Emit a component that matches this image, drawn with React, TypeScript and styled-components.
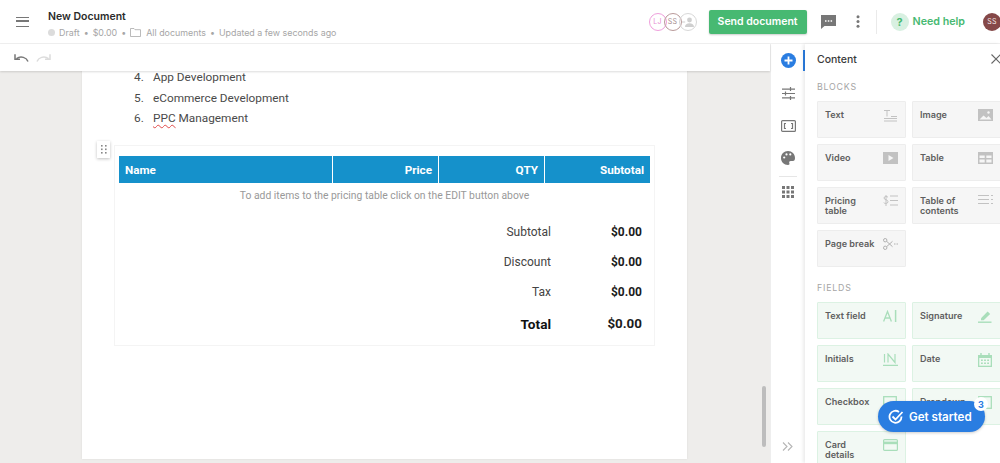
import React, { FunctionComponent, ReactNode } from 'react';
import styled, { createGlobalStyle } from 'styled-components';

const Global = createGlobalStyle`
  html, body { margin: 0; padding: 0; height: 100%; overflow: hidden; background: #fff; }
  body { font-family: Inter, "Liberation Sans", sans-serif; }
  * { box-sizing: border-box; }
`;

const Page = styled.div`
  width: 1000px;
  height: 463px;
  display: flex;
  flex-direction: column;
  position: relative;
  overflow: hidden;
`;

const Header = styled.header`
  height: 44px;
  flex: none;
  display: flex;
  align-items: center;
  padding: 0 0 0 16px;
  border-bottom: 1px solid #f0f0f0;
`;

const MenuButton = styled.div`
  width: 13px;
  height: 10px;
  border-top: 1.5px solid #777;
  border-bottom: 1.5px solid #777;
  position: relative;
  &::after {
    content: '';
    position: absolute;
    left: 0;
    right: 0;
    top: 2.7px;
    height: 1.5px;
    background: #777;
  }
`;

const DocInfo = styled.div`
  margin-left: 19px;
  flex: 1;
  margin-top: 5px;
`;

const DocTitle = styled.div`
  font-size: 10.5px;
  font-weight: 600;
  color: #2b2b2b;
  line-height: 14px;
`;

const DocMeta = styled.div`
  display: flex;
  align-items: center;
  font-size: 8.9px;
  color: #a6a6a6;
  line-height: 12px;
  margin-top: 3px;
  white-space: nowrap;
`;

const StatusDot = styled.span`
  width: 7px;
  height: 7px;
  border-radius: 50%;
  background: #dcdcdc;
  margin-right: 4px;
`;

const Sep = styled.span`
  margin: 0 4px;
`;

const Avatars = styled.div`
  display: flex;
  margin-right: 12px;
`;

const Avatar = styled.div<{ $color: string; $text: string }>`
  width: 18px;
  height: 18px;
  border-radius: 50%;
  border: 1px solid ${p => p.$color};
  color: ${p => p.$text};
  background: transparent;
  font-size: 7px;
  letter-spacing: .3px;
  display: flex;
  align-items: center;
  justify-content: center;
  margin-left: -3px;
`;

const SendButton = styled.button`
  width: 98px;
  height: 24px;
  border: 0;
  border-radius: 2px;
  background: #47b972;
  color: #fff;
  font: 600 10.5px Inter, sans-serif;
  padding: 0;
  box-shadow: 0 1px 2px rgba(0,0,0,.2);
`;

const IconSlot = styled.div<{ $ml: number }>`
  margin-left: ${p => p.$ml}px;
  display: flex;
  align-items: center;
`;

const VDivider = styled.div`
  width: 1px;
  height: 24px;
  background: #eaeaea;
  margin-left: 16px;
`;

const HelpBadge = styled.div`
  width: 18px;
  height: 18px;
  border-radius: 50%;
  background: #d8f0e1;
  color: #47b972;
  font-size: 11px;
  font-weight: 700;
  display: flex;
  align-items: center;
  justify-content: center;
  margin-left: 14px;
`;

const HelpText = styled.div`
  font-size: 10.7px;
  font-weight: 600;
  color: #47b972;
  margin-left: 4px;
  white-space: nowrap;
`;

const UserAvatar = styled.div`
  width: 18px;
  height: 18px;
  border-radius: 50%;
  background: #854848;
  color: #f3e7e7;
  font-size: 7px;
  letter-spacing: .3px;
  display: flex;
  align-items: center;
  justify-content: center;
  flex: none;
  margin-left: 18px;
  margin-right: -1px;
`;

const Body = styled.div`
  flex: 1;
  display: flex;
  min-height: 0;
`;

const Main = styled.main`
  width: 770px;
  flex: none;
  display: flex;
  flex-direction: column;
  min-height: 0;
  position: relative;
`;

const Toolbar = styled.div`
  height: 27px;
  flex: none;
  display: flex;
  align-items: center;
  gap: 7px;
  padding: 0 14px;
  background: #fff;
  box-shadow: 0 1px 2px rgba(0,0,0,.14);
  position: relative;
  z-index: 2;
`;

const Canvas = styled.div`
  flex: 1;
  background: #eeedeb;
  padding: 0 83px 0 82px;
  min-height: 0;
  overflow: hidden;
`;

const Scrollbar = styled.div`
  position: absolute;
  left: 762px;
  top: 342px;
  width: 4px;
  height: 61px;
  background: #bdbdbd;
  border-radius: 2px;
`;

const Sheet = styled.div`
  background: #fff;
  height: 100%;
  padding: 0 32px;
  font-family: Roboto, sans-serif;
  box-shadow: 0 0 2px rgba(0,0,0,.08);
  position: relative;
`;

const ServiceList = styled.div`
  margin-top: -4px;
  padding: 0 0 0 20px;
  height: 78px;
`;

const ServiceItem = styled.div`
  display: flex;
  font-size: 11.8px;
  color: #4a4a4a;
  line-height: 20.5px;
`;

const ItemNum = styled.span`
  width: 19px;
`;

const Squiggle = styled.span`
  text-decoration: underline wavy #e04a4a 1px;
  text-underline-offset: 2px;
`;

const DragHandle = styled.div`
  position: absolute;
  left: 15px;
  top: 74px;
  width: 13px;
  height: 17px;
  background: #fff;
  box-shadow: 0 1px 3px rgba(0,0,0,.25);
  display: flex;
  align-items: center;
  justify-content: center;
`;

const PricingBlock = styled.div`
  width: 541px;
  height: 201px;
  border: 1px solid #f4f4f4;
  padding: 10px 4px 0 4px;
`;

const TableHead = styled.div`
  display: grid;
  grid-template-columns: 213px 105px 105px 105px;
  gap: 1px;
  height: 27px;
`;

const HeadCell = styled.div<{ $left?: boolean }>`
  background: #1591cb;
  color: #fff;
  font-size: 11.7px;
  font-weight: 700;
  display: flex;
  align-items: center;
  justify-content: ${p => (p.$left ? 'flex-start' : 'flex-end')};
  padding: 0 6px;
`;

const EmptyNote = styled.div`
  text-align: center;
  color: #999;
  font-size: 10.35px;
  line-height: 14px;
  margin-top: 6px;
  margin-bottom: 14px;
`;

const TotalRow = styled.div<{ $big?: boolean }>`
  display: flex;
  justify-content: flex-end;
  align-items: center;
  height: ${p => (p.$big ? 33 : 30)}px;
  padding-right: 8px;
`;

const TotalLabel = styled.div<{ $big?: boolean }>`
  font-size: ${p => (p.$big ? 13.6 : 12)}px;
  font-weight: ${p => (p.$big ? 700 : 400)};
  color: ${p => (p.$big ? '#111' : '#444')};
`;

const TotalValue = styled.div<{ $big?: boolean }>`
  width: 91px;
  text-align: right;
  font-size: ${p => (p.$big ? 13.4 : 12)}px;
  font-weight: 700;
  color: #1c1c1c;
`;

const Rail = styled.nav`
  width: 35px;
  flex: none;
  display: flex;
  flex-direction: column;
  align-items: center;
  border-left: 1px solid #eee;
  padding-top: 9px;
  position: relative;
`;

const RailItem = styled.div<{ $h: number }>`
  height: ${p => p.$h}px;
  display: flex;
  align-items: flex-start;
  justify-content: center;
`;

const RailDivider = styled.div`
  width: 18px;
  height: 1px;
  background: #e6e6e6;
  margin-bottom: 9px;
`;

const Collapse = styled.div`
  position: absolute;
  left: 11px;
  top: 398px;
  display: flex;
`;

const ActiveMark = styled.div`
  position: absolute;
  right: 0;
  top: 6px;
  width: 2px;
  height: 21px;
  background: #2a7de1;
`;

const Panel = styled.aside`
  flex: 1;
  padding: 0 0 0 12px;
  box-shadow: -2px 0 3px rgba(0,0,0,.08);
  position: relative;
  overflow: hidden;
`;

const PanelHead = styled.div`
  display: flex;
  justify-content: space-between;
  align-items: center;
  height: 30px;
  font-size: 10.5px;
  font-weight: 500;
  color: #3a3a3a;
`;

const SectionTitle = styled.div<{ $mt: number }>`
  font-size: 8.8px;
  letter-spacing: .8px;
  color: #a5a5a5;
  line-height: 12px;
  margin-top: ${p => p.$mt}px;
  margin-bottom: 8px;
`;

const Tiles = styled.div`
  display: grid;
  grid-template-columns: 89px 89px;
  grid-auto-rows: 37px;
  gap: 6px;
`;

const Tile = styled.div<{ $field?: boolean }>`
  background: ${p => (p.$field ? '#f2f9f4' : '#f6f6f6')};
  border: 1px solid ${p => (p.$field ? '#dcf2e3' : '#ededed')};
  border-radius: 1px;
  padding: 7.5px 0 0 7px;
  display: flex;
  justify-content: space-between;
  font-size: 9.1px;
  font-weight: 600;
  line-height: 10.5px;
  color: #5f5f5f;
  min-width: 0;
`;

const TileIcon = styled.div`
  flex: none;
  width: 22px;
  margin-top: -.5px;
  display: flex;
`;

const GetStarted = styled.div`
  position: absolute;
  left: 878px;
  top: 401px;
  width: 107px;
  height: 31px;
  border-radius: 16px;
  background: #2a7de1;
  color: #fff;
  font-size: 11.6px;
  font-weight: 600;
  display: flex;
  align-items: center;
  padding-left: 10px;
  gap: 5px;
  box-shadow: 0 1px 3px rgba(0,0,0,.2);
`;

const Count = styled.div`
  position: absolute;
  right: -3px;
  top: -4px;
  width: 14px;
  height: 14px;
  border-radius: 50%;
  background: #fff;
  color: #2a7de1;
  font-size: 9px;
  font-weight: 700;
  display: flex;
  align-items: center;
  justify-content: center;
`;

const G = '#a9deba';
const K = '#c2c2c2';

const Grip = () => (
  <svg width="6" height="9" viewBox="0 0 6 9" fill="#888">
    {[0, 3.5, 7].map(y => [0, 4].map(x => <rect key={`${x}-${y}`} x={x} y={y} width="1.6" height="1.6" />))}
  </svg>
);

const blocks: { label: ReactNode; icon: ReactNode }[] = [
  { label: 'Text', icon: <svg width="15" height="13" viewBox="0 0 15 13" fill="none" stroke={K}><path d="M1 1.5h6M4 1.5v6M8 7.5h6M1 9.5h13M1 12h13" /></svg> },
  { label: 'Image', icon: <svg width="15" height="12" viewBox="0 0 15 12"><rect width="15" height="12" fill={K} /><path d="M1.5 10.5l4-4 3 2.5 2-2 3 3.5z" fill="#f6f6f6" /><circle cx="10.5" cy="3.5" r="1.2" fill="#f6f6f6" /></svg> },
  { label: 'Video', icon: <svg width="15" height="12" viewBox="0 0 15 12"><rect width="15" height="12" fill={K} /><path d="M5.5 3l5 3-5 3z" fill="#f6f6f6" /></svg> },
  { label: 'Table', icon: <svg width="15" height="12" viewBox="0 0 15 12"><rect width="15" height="12" fill={K} /><path d="M1.5 3.5h5.2v2.6H1.5zM8.3 3.5h5.2v2.6H8.3zM1.5 7.5h5.2v3H1.5zM8.3 7.5h5.2v3H8.3z" fill="#f6f6f6" /></svg> },
  { label: <>Pricing<br />table</>, icon: <svg width="15" height="11" viewBox="0 0 15 11" fill="none" stroke={K}><path d="M7 1h8M7 5.500h8M7 10h8" /><path d="M5 2.300C4.400 1.200 1 1 1 3c0 2.200 4 1.300 4 3.700C5 9 1.400 8.800.7 7.600M3 0v11" /></svg> },
  { label: <>Table of<br />contents</>, icon: <svg width="15" height="9" viewBox="0 0 15 9" fill="none" stroke={K}><path d="M0 .5h11M0 4.500h11M0 8.500h11M13 .5h2M13 4.500h2M13 8.500h2" /></svg> },
  { label: 'Page break', icon: <svg width="15" height="12" viewBox="0 0 15 12" fill="none" stroke="#b0b0b0"><circle cx="2.200" cy="2.200" r="1.700" /><circle cx="2.200" cy="9.800" r="1.700" /><path d="M3.500 3.200l6 5.500M3.500 8.800l6-5.500M11 6h1.500M13.500 6H15" /></svg> },
];

const fields: { label: ReactNode; icon: ReactNode }[] = [
  { label: 'Text field', icon: <svg width="14" height="12" viewBox="0 0 14 12" fill="none" stroke={G} strokeWidth="1.300"><path d="M.6 11.500L4.500 1.500l3.900 10M2 8h5" /><path d="M12.600 0v12" strokeWidth="1.500" /></svg> },
  { label: 'Signature', icon: <svg width="14" height="13" viewBox="0 0 14 13"><path d="M3 8.200L9.600 1.500l2.600 2.400-6.600 6.400H3z" fill={G} /><path d="M0 12.200h13.500" stroke={G} strokeWidth="1.400" /></svg> },
  { label: 'Initials', icon: <svg width="15" height="13" viewBox="0 0 15 13" fill="none" stroke={G} strokeWidth="1.200"><path d="M1.500 1v8.500M5 9.500V1l7 8.500V1M0 12.400h15" /></svg> },
  { label: 'Date', icon: <svg width="14" height="14" viewBox="0 0 14 14"><path d="M0 2h14v12H0z" fill={G} /><path d="M3 0v2M11 0v2" stroke={G} strokeWidth="1.400" /><path d="M1.300 5h11.400v7.700H1.300z" fill="#f2f9f4" /><path d="M3 6.500h1.800v1.600H3zM6.100 6.500h1.800v1.600H6.100zM9.200 6.500H11v1.600H9.200zM3 9.400h1.800V11H3zM6.100 9.400h1.800V11H6.100zM9.200 9.400H11V11H9.200z" fill={G} /></svg> },
  { label: 'Checkbox', icon: <svg width="14" height="13" viewBox="0 0 14 13" fill="none" stroke={G} strokeWidth="1.300"><rect x=".7" y=".7" width="12.600" height="11.600" /></svg> },
  { label: 'Dropdown', icon: <svg width="14" height="13" viewBox="0 0 14 13" fill="none" stroke={G} strokeWidth="1.300"><rect x=".7" y=".7" width="12.600" height="11.600" /></svg> },
  { label: <>Card<br />details</>, icon: <svg width="15" height="12" viewBox="0 0 15 12"><rect x=".6" y=".6" width="13.800" height="10.800" rx="1" fill="none" stroke={G} strokeWidth="1.200" /><rect y="2.600" width="15" height="2.600" fill={G} /></svg> },
];

const totals = [
  { label: 'Subtotal', value: '$0.00' },
  { label: 'Discount', value: '$0.00' },
  { label: 'Tax', value: '$0.00' },
];

const TileGroup: FunctionComponent<{ items: { label: ReactNode; icon: ReactNode }[]; field?: boolean }> = ({ items, field }) => (
  <Tiles>
    {items.map((t, i) => (
      <Tile key={i} $field={field}>
        <span>{t.label}</span>
        <TileIcon>{t.icon}</TileIcon>
      </Tile>
    ))}
  </Tiles>
);

const App = () => (
  <Page>
    <Global />
    <Header>
      <MenuButton />
      <DocInfo>
        <DocTitle>New Document</DocTitle>
        <DocMeta>
          <StatusDot />Draft<Sep>•</Sep>$0.00<Sep>•</Sep>
          <svg width="11" height="9" viewBox="0 0 11 9" fill="none" stroke="#aaa" strokeWidth=".8" style={{ marginRight: 5 }}>
            <path d="M.5 8.500v-8h3.500l1 1.200h5.500v6.800z" />
          </svg>
          All documents<Sep>•</Sep>Updated a few seconds ago
        </DocMeta>
      </DocInfo>
      <Avatars>
        <Avatar $color="#ef9fdc" $text="#e88fd3">LJ</Avatar>
        <Avatar $color="#b99a9a" $text="#a89090">SS</Avatar>
        <Avatar $color="#d8d8d8" $text="#c8c8c8">
          <svg width="12" height="10" viewBox="0 0 12 10" fill="#cfcfcf">
            <circle cx="7.500" cy="3" r="2.400" />
            <path d="M3 10c0-2.600 2-3.800 4.500-3.800S12 7.400 12 10zM0 4.600h3.200v.8H0z" />
          </svg>
        </Avatar>
      </Avatars>
      <SendButton>Send document</SendButton>
      <IconSlot $ml={14}>
        <svg width="15" height="14" viewBox="0 0 15 14">
          <path d="M0 0h15v11H3.500L0 14z" fill="#777" />
          <path d="M4 5.200h1.500v1.500H4zM6.800 5.200h1.500v1.500H6.800zM9.600 5.200h1.500v1.500H9.600z" fill="#fff" />
        </svg>
      </IconSlot>
      <IconSlot $ml={20}>
        <svg width="4" height="13" viewBox="0 0 4 13" fill="#777">
          <circle cx="2" cy="1.800" r="1.500" /><circle cx="2" cy="6.500" r="1.500" /><circle cx="2" cy="11.200" r="1.500" />
        </svg>
      </IconSlot>
      <VDivider />
      <HelpBadge>?</HelpBadge>
      <HelpText>Need help</HelpText>
      <UserAvatar>SS</UserAvatar>
    </Header>
    <Body>
      <Main>
        <Toolbar>
          <svg width="15" height="9" viewBox="0 0 15 9" fill="none" stroke="#777" strokeWidth="1.500">
            <path d="M14 8.500C12.500 4.500 7 2.500 2.500 5.500M1 1.200v5h5" />
          </svg>
          <svg width="15" height="9" viewBox="0 0 15 9" fill="none" stroke="#dcdcdc" strokeWidth="1.500">
            <path d="M1 8.500C2.500 4.500 8 2.500 12.500 5.500M14 1.200v5H9" />
          </svg>
        </Toolbar>
        <Canvas>
          <Sheet>
            <ServiceList>
              <ServiceItem><ItemNum>4.</ItemNum>App Development</ServiceItem>
              <ServiceItem><ItemNum>5.</ItemNum>eCommerce Development</ServiceItem>
              <ServiceItem><ItemNum>6.</ItemNum><span><Squiggle>PPC</Squiggle> Management</span></ServiceItem>
            </ServiceList>
            <DragHandle><Grip /></DragHandle>
            <PricingBlock>
              <TableHead>
                <HeadCell $left>Name</HeadCell>
                <HeadCell>Price</HeadCell>
                <HeadCell>QTY</HeadCell>
                <HeadCell>Subtotal</HeadCell>
              </TableHead>
              <EmptyNote>To add items to the pricing table click on the EDIT button above</EmptyNote>
              {totals.map(t => (
                <TotalRow key={t.label}>
                  <TotalLabel>{t.label}</TotalLabel>
                  <TotalValue>{t.value}</TotalValue>
                </TotalRow>
              ))}
              <TotalRow $big>
                <TotalLabel $big>Total</TotalLabel>
                <TotalValue $big>$0.00</TotalValue>
              </TotalRow>
            </PricingBlock>
          </Sheet>
        </Canvas>
        <Scrollbar />
      </Main>
      <Rail>
        <ActiveMark />
        <RailItem $h={34}>
          <svg width="15" height="15" viewBox="0 0 15 15">
            <circle cx="7.500" cy="7.500" r="7.500" fill="#2a7de1" />
            <path d="M7.500 3.500v8M3.500 7.500h8" stroke="#fff" strokeWidth="1.800" />
          </svg>
        </RailItem>
        <RailItem $h={33}>
          <svg width="13" height="13" viewBox="0 0 13 13" fill="none" stroke="#777" strokeWidth="1.200">
            <path d="M0 2.200h13M0 6.500h13M0 10.800h13M8.500 0v4M3.500 4.500v4M8.500 9v4" />
          </svg>
        </RailItem>
        <RailItem $h={31}>
          <svg width="15" height="12" viewBox="0 0 15 12" fill="none" stroke="#777" strokeWidth="1.200">
            <rect x=".6" y=".6" width="13.800" height="10.800" rx="1" />
            <path d="M5 3.500H3.500v5H5M10 3.500h1.500v5H10" />
          </svg>
        </RailItem>
        <RailItem $h={25}>
          <svg width="14" height="14" viewBox="0 0 14 14">
            <path d="M7 0C3 0 0 3 0 7s3 7 7 7c1.300 0 1.800-1 1.300-2-.5-1.200.3-2 1.500-2H12c1.300 0 2-1 2-3 0-4-3-7-7-7z" fill="#777" />
            <circle cx="3.200" cy="6.500" r="1.100" fill="#fff" /><circle cx="5.500" cy="3.400" r="1.100" fill="#fff" /><circle cx="9.300" cy="3.400" r="1.100" fill="#fff" />
          </svg>
        </RailItem>
        <RailDivider />
        <svg width="12" height="12" viewBox="0 0 12 12" fill="#777">
          {[0, 4.5, 9].map(y => [0, 4.5, 9].map(x => <rect key={`${x}-${y}`} x={x} y={y} width="3" height="3" />))}
        </svg>
        <Collapse>
          <svg width="11" height="9" viewBox="0 0 11 9" fill="none" stroke="#b5b5b5" strokeWidth="1.100">
            <path d="M1 .5l4 4-4 4M6 .5l4 4-4 4" />
          </svg>
        </Collapse>
      </Rail>
      <Panel>
        <PanelHead>
          Content
          <svg width="10" height="10" viewBox="0 0 10 10" stroke="#666" strokeWidth="1.100" style={{ marginRight: -1 }}>
            <path d="M.5.500l9 9M9.500.500l-9 9" />
          </svg>
        </PanelHead>
        <SectionTitle $mt={7}>BLOCKS</SectionTitle>
        <TileGroup items={blocks} />
        <SectionTitle $mt={15}>FIELDS</SectionTitle>
        <TileGroup items={fields} field />
      </Panel>
    </Body>
    <GetStarted>
      <svg width="16" height="16" viewBox="0 0 16 16" fill="none" stroke="#fff" strokeWidth="1.800">
        <path d="M13.500 7.500a6 6 0 1 1-2.500-4.600" />
        <path d="M4.500 7.500l3 3L14.500 3" />
      </svg>
      Get started
      <Count>3</Count>
    </GetStarted>
  </Page>
);

export default App;
